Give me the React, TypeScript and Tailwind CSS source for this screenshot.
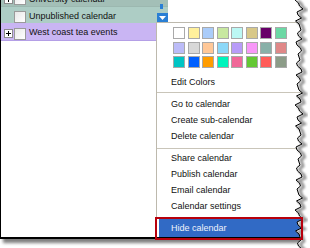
const swatches = [
  "#ffffff", "#fff09c", "#aaccfa", "#c8e8a0", "#bcf8f4", "#d8c888", "#680068", "#6cd8a4",
  "#bcbcf8", "#d8d8d8", "#ffc898", "#8cd8f8", "#b89cf8", "#f898f8", "#88b0a8", "#e08888",
  "#00c4c4", "#0060ff", "#ff9c00", "#00f4bc", "#f06898", "#64c834", "#ff5c58", "#8c9c88",
];

// ragged "torn paper" edge on the right of the clipping
const tear = Array.from({ length: 84 }, (_, i) => {
  const off = ((i * 37) % 7) - 3 + (((i * 13) % 5) - 2) * 0.5;
  return [299 + off, i * 3] as const;
});
const tearLine = tear.map(([x, y]) => `${x},${y}`).join(" ");
const tearFill = `M310 0 L${tear.map(([x, y]) => `${x} ${y}`).join(" L")} L310 252 Z`;
const tearShadow = tear.map(([x, y]) => `${x + 3},${y + 1}`).join(" ");

const PlusBox = () => (
  <div className="w-[9px] h-[9px] border border-[#8c8c8c] bg-white flex items-center justify-center shrink-0">
    <svg width="5" height="5" viewBox="0 0 5 5">
      <path d="M0 2.5H5M2.5 0V5" stroke="#000" strokeWidth="1" />
    </svg>
  </div>
);

const CheckBox = () => (
  <div className="w-[12px] h-[12px] border border-[#9a9a9a] bg-gradient-to-br from-[#e8e8e8] to-white shrink-0" />
);

const MenuItem = ({ label }: { label: string }) => (
  <div className="h-[16px] flex items-center pt-[3px] pl-[14px] text-[#111]">{label}</div>
);

const Separator = ({ className }: { className: string }) => (
  <div className={`h-px bg-[#c9c5b9] ${className}`} />
);

export default function App() {
  return (
    <div
      className="relative w-[310px] h-[248px] bg-white overflow-hidden text-[9px]"
      style={{ fontFamily: '"Liberation Sans", Arial, sans-serif' }}
    >
      {/* the clipped screenshot */}
      <div className="relative w-[304px] h-[239px] border-l border-b-2 border-black bg-white overflow-hidden shadow-[3px_4px_3px_rgba(0,0,0,0.5)]">
        {/* calendar list */}
        <div className="w-[167px] -mt-[11px] flex flex-col">
          <div className="h-[17px] bg-[#a3bfb7] flex items-center gap-[1px] pl-[3px] relative">
            <div className="mt-[3px]">
              <PlusBox />
            </div>
            <div className="mt-[3px]">
              <CheckBox />
            </div>
            <span className="ml-[2px] mt-[4px] text-[#111]">University calendar</span>
            <div className="absolute right-[5px] -bottom-[3px] w-[3px] h-[5px] bg-[#2a7fd4]" />
          </div>
          <div className="h-[17px] bg-[#adcdc5] flex items-center gap-[1px] pl-[3px] border-t border-[#9cb8b0]">
            <div className="w-[9px] shrink-0" />
            <div className="mt-[3px]">
              <CheckBox />
            </div>
            <span className="ml-[2px] mt-[3px] text-[#111]">Unpublished calendar</span>
            <div className="ml-auto self-end mb-[1px] w-[11px] h-[9px] bg-[#2a7fd4] flex items-center justify-center">
              <svg width="7" height="4" viewBox="0 0 7 4">
                <path d="M0 0H7L3.5 4Z" fill="#fff" />
              </svg>
            </div>
          </div>
          <div className="h-[18px] bg-[#c9b5f3] border-b border-[#b49fe6] flex items-center gap-[1px] pl-[3px]">
            <div className="mt-[4px]">
              <PlusBox />
            </div>
            <div className="mt-[4px]">
              <CheckBox />
            </div>
            <span className="ml-[2px] mt-[3px] text-[#111]">West coast tea events</span>
          </div>
        </div>

        {/* context menu */}
        <div className="absolute left-[155px] top-[22px] w-[160px] h-[230px] bg-white border-l border-t border-[#bdb9ad] flex flex-col">
          <div className="pt-[4px] pl-[16px] grid grid-cols-[repeat(8,12px)] gap-x-[2.5px] gap-y-[2.5px]">
            {swatches.map((c, i) => (
              <div key={i} className="w-[12px] h-[12px] border border-[#a9a9a9]" style={{ backgroundColor: c }} />
            ))}
          </div>
          <div className="mt-[5px]">
            <MenuItem label="Edit Colors" />
          </div>
          <Separator className="mt-[3px]" />
          <div className="mt-[2px]">
            <MenuItem label="Go to calendar" />
            <MenuItem label="Create sub-calendar" />
            <MenuItem label="Delete calendar" />
          </div>
          <Separator className="mt-[5px]" />
          <div>
            <MenuItem label="Share calendar" />
            <MenuItem label="Publish calendar" />
            <MenuItem label="Email calendar" />
            <MenuItem label="Calendar settings" />
          </div>
          <div className="mt-[5px] ml-[2px] h-[19px] bg-[#316ac5] text-[#eef2fb] flex items-center pl-[12px] pt-[2px]">
            Hide calendar
          </div>
        </div>
      </div>

      {/* torn right edge */}
      <svg className="absolute inset-0" width="310" height="248" viewBox="0 0 310 248">
        <defs>
          <filter id="blur" x="-20%" y="-5%" width="140%" height="110%">
            <feGaussianBlur stdDeviation="1" />
          </filter>
        </defs>
        <path d={tearFill} fill="#fff" />
        <polyline points={tearShadow} fill="none" stroke="#6a6a6a" strokeWidth="3" opacity="0.7" filter="url(#blur)" />
        <polyline points={tearLine} fill="none" stroke="#000" strokeWidth="1" />
      </svg>

      {/* annotation box */}
      <div className="absolute left-[155px] top-[217px] w-[148px] h-[23px] border-2 border-[#b8000c]" />
    </div>
  );
}
